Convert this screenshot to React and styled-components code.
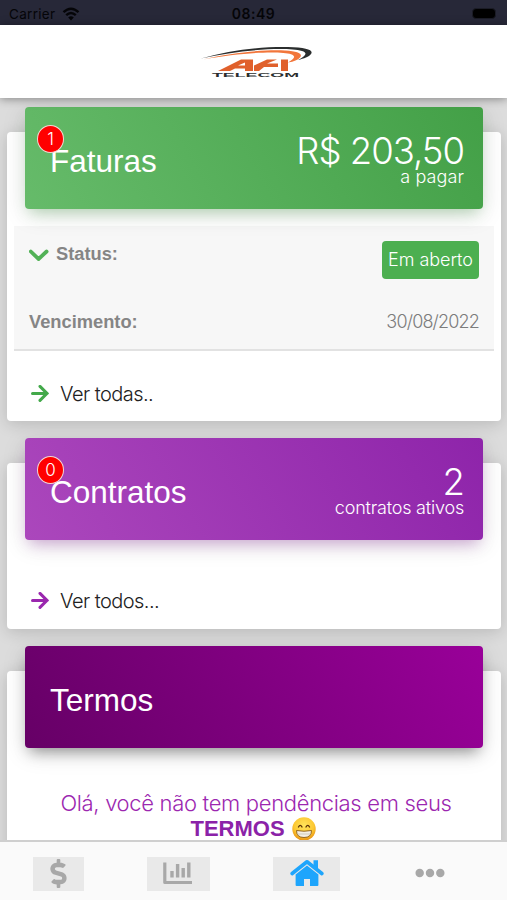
import React from 'react'
import styled, { createGlobalStyle } from 'styled-components'
import { FaDollarSign, FaEllipsisH } from 'react-icons/fa'

const App = () => {
  return (
    <React.Fragment>
      <GlobalStyle />
      <Wrap>
        <StatusBar>
          <Carrier>
            <span>Carrier</span>
            <Wifi />
          </Carrier>
          <Clock>08:49</Clock>
          <BatteryArea>
            <Battery />
          </BatteryArea>
        </StatusBar>
        <Header>
          <Logo />
        </Header>

        <Content>
          <Card height="289px">
            <CardHead bg="linear-gradient(60deg, #66bb6a, #43a047)" glow="rgba(76, 175, 80, 0.35)">
              <CardTitle>Faturas<Badge>1</Badge></CardTitle>
              <CardInfo>
                <Value>R$ 203,50</Value>
                <Label spacing="0.1px">a pagar</Label>
              </CardInfo>
            </CardHead>
            <Invoice>
              <InvoiceRow height="68px">
                <RowName>
                  <Chevron />
                  Status:
                </RowName>
                <StatusTag>Em aberto</StatusTag>
              </InvoiceRow>
              <InvoiceRow height="55px">
                <RowName low>Vencimento:</RowName>
                <DueDate>30/08/2022</DueDate>
              </InvoiceRow>
            </Invoice>
            <SeeAll height="85px">
              <Arrow color="#43a94a" />
              <SeeAllText>Ver todas..</SeeAllText>
            </SeeAll>
          </Card>

          <Card height="166px">
            <CardHead bg="linear-gradient(60deg, #ab47bc, #8e24aa)" glow="rgba(156, 39, 176, 0.35)">
              <CardTitle>Contratos<Badge>0</Badge></CardTitle>
              <CardInfo>
                <Value>2</Value>
                <Label spacing="-0.2px">contratos ativos</Label>
              </CardInfo>
            </CardHead>
            <SeeAll height="88px">
              <Arrow color="#9a27ae" />
              <SeeAllText>Ver todos...</SeeAllText>
            </SeeAll>
          </Card>

          <Card height="260px">
            <CardHead bg="linear-gradient(60deg, #660066, #990099)" glow="rgba(0, 0, 0, 0.4)">
              <CardTitle>Termos</CardTitle>
            </CardHead>
            <Message>
              <MessageText>Olá, você não tem pendências em seus</MessageText>
              <MessageStrong>
                TERMOS
                <Smile />
              </MessageStrong>
            </Message>
          </Card>
        </Content>

        <TabBar>
          <TabItem><TabBox width="51px"><FaDollarSign size={29} /></TabBox></TabItem>
          <TabItem><TabBox width="63px"><ChartIcon /></TabBox></TabItem>
          <TabItem><TabBox width="67px" active><HomeIcon /></TabBox></TabItem>
          <TabItem><TabBox width="60px" plain><FaEllipsisH size={30} /></TabBox></TabItem>
        </TabBar>
      </Wrap>
    </React.Fragment>
  )
}

const Wifi = () => (
  <svg width="18" height="14" viewBox="0 0 18 14">
    <path d="M1.5 5.2 Q9 -1.8 16.5 5.2 M4.2 8.2 Q9 3.8 13.8 8.2" fill="none" stroke="currentColor" strokeWidth="2.4" />
    <path d="M6.2 10.4 Q9 8 11.8 10.4 L9 13.4Z" fill="currentColor" />
  </svg>
)

const Logo = () => (
  <svg width="114" height="36" viewBox="0 0 114 36">
    <path d="M1 13.5 C30 5 62 1.5 88 2 C106 2.4 114 5 111 9 C109 12 104 13.5 98 15 C106 11 108 8 102 6 C85 1.5 39 5 1 13.5Z" fill="#2b2e2e" />
    <path d="M3 14.5 C34 7 66 4.5 85 5.5 C99 6.5 103 9 100 12.5 C98 15 94 16.5 88 17.5 C95 13.5 96 11 91 9.2 C81 6 42 7 3 14.5Z" fill="#f2763b" />
    <path d="M18 26 L41 14.5 H53 V26 H45 V23.5 H35 L30 26Z M38 20.5 H45 V17.5Z" fill="#e0602b" fillRule="evenodd" />
    <path d="M54 26 V20.5 L67 14.5 H77 L67 18.5 H78 V22 H64 L59 26Z" fill="#e0602b" />
    <path d="M81 14.5 H88 V26 H81Z" fill="#e0602b" />
    <LogoText x="12" y="32" textLength="87" lengthAdjust="spacingAndGlyphs">TELECOM</LogoText>
  </svg>
)

const Chevron = () => (
  <svg width="22" height="14" viewBox="0 0 22 14">
    <path d="M1.8 4.5 L9.6 12 L17.6 4.5" fill="none" stroke="#52b257" strokeWidth="3.8" strokeLinecap="round" />
  </svg>
)

const Arrow = ({ color }) => (
  <svg width="18" height="18" viewBox="0 0 18 18">
    <path d="M1.5 8.4 H16 M9 1.4 L16 8.4 L9 15.4" fill="none" stroke={color} strokeWidth="3" strokeLinecap="round" />
  </svg>
)

const ChartIcon = () => (
  <svg width="30" height="24" viewBox="0 0 30 24" fill="none" stroke="currentColor">
    <path d="M1.8 1.5 V21.5 H29" strokeWidth="3.2" strokeLinejoin="round" />
    <path d="M9 10 V16.5 M14.6 3 V16.5 M20.2 7 V16.5 M25.8 1.5 V16.5" strokeWidth="3.4" />
  </svg>
)

const HomeIcon = () => (
  <svg width="34" height="28" viewBox="0 0 34 28" fill="currentColor">
    <path d="M23.5 1.2 H28 V12 L23.5 8.5Z" />
    <path d="M2.2 14.5 L17 2.8 L31.8 14.5" fill="none" stroke="currentColor" strokeWidth="3.7" strokeLinecap="round" strokeLinejoin="round" />
    <path d="M5.6 15.6 L17 6.6 L28.4 15.6 V26 Q28.4 27 27.4 27 H20 V20 H14 V27 H6.6 Q5.6 27 5.6 26Z" />
  </svg>
)

const Smile = () => (
  <svg width="24" height="24" viewBox="0 0 24 24">
    <defs>
      <radialGradient id="face" cx="50%" cy="35%" r="65%">
        <stop offset="0" stopColor="#ffe45c" />
        <stop offset="0.65" stopColor="#fcc832" />
        <stop offset="1" stopColor="#e89012" />
      </radialGradient>
    </defs>
    <circle cx="12" cy="12" r="11.7" fill="url(#face)" />
    <path d="M6.5 10 Q8.2 6.8 10 10 M14 10 Q15.8 6.8 17.5 10" fill="none" stroke="#5c3408" strokeWidth="1.4" strokeLinecap="round" />
    <path d="M4.5 13.5 Q12 15 19.5 13.5 Q19.5 20.5 12 20.5 Q4.5 20.5 4.5 13.5Z" fill="#f4efe4" stroke="#8a5a18" strokeWidth="0.9" />
    <path d="M5 17 H19" stroke="#b9b1a4" strokeWidth="0.6" />
  </svg>
)

const GlobalStyle = createGlobalStyle`
  body {
    margin: 0;
    font-family: "Liberation Sans", Arial, sans-serif;
  }
  * {
    box-sizing: border-box;
  }
`

const Wrap = styled.div`
  width: 100%;
  height: 900px;
  display: flex;
  flex-direction: column;
  overflow: hidden;
  background-color: #dcdcdc;
`

const StatusBar = styled.div`
  height: 25px;
  flex-shrink: 0;
  display: grid;
  grid-template-columns: 1fr auto 1fr;
  align-items: center;
  padding: 2px 9px 0px 9px;
  background-color: #272838;
  color: #050508;
`

const Carrier = styled.div`
  display: flex;
  align-items: center;
  gap: 7px;
  font-family: Inter, sans-serif;
  font-size: 13.5px;
  letter-spacing: 0.3px;
`

const Clock = styled.div`
  font-family: Inter, sans-serif;
  font-size: 14px;
  font-weight: 600;
  letter-spacing: 0.5px;
`

const BatteryArea = styled.div`
  display: flex;
  justify-content: flex-end;
`

const Battery = styled.div`
  width: 24px;
  height: 11px;
  margin-right: 2px;
  border: 1px solid #1b1c26;
  border-radius: 4px;
  background-color: #000;
`

const Header = styled.div`
  height: 73px;
  flex-shrink: 0;
  display: flex;
  justify-content: center;
  padding: 20px 0px 0px 7px;
  background-color: #fff;
  box-shadow: 0px 1px 9px rgba(0, 0, 0, 0.4);
  z-index: 1;
`

const LogoText = styled.text`
  font-family: "Liberation Sans", Arial, sans-serif;
  font-size: 6px;
  font-weight: bold;
  fill: #2b2e2e;
`

const Content = styled.div`
  flex: 1;
  min-height: 0;
  overflow: hidden;
  padding: 34px 6px 0px 7px;
`

const Card = styled.div`
  height: ${(props) => props.height};
  margin-bottom: 42px;
  padding: 0px 7px;
  background-color: #fff;
  border-radius: 4px;
  box-shadow: 0px 3px 16px rgba(0, 0, 0, 0.16);
`

const CardHead = styled.div`
  height: 101.5px;
  position: relative;
  top: -25px;
  margin: 0px 11px -7.5px 11px;
  padding: 0px 19px 0px 25px;
  display: flex;
  justify-content: space-between;
  border-radius: 4px;
  background: ${(props) => props.bg};
  color: #fff;
  box-shadow: 0px 5px 24px rgba(0, 0, 0, 0.12), 0px 8px 14px -5px ${(props) => props.glow};
`

const CardTitle = styled.div`
  position: relative;
  margin-top: 36px;
  font-size: 31.5px;
  line-height: 36px;
`

const Badge = styled.div`
  position: absolute;
  top: -18px;
  left: -13px;
  width: 27px;
  height: 28px;
  border: 1.5px solid #f3d9d3;
  border-radius: 50%;
  background-color: #f00;
  font-family: Inter, sans-serif;
  font-weight: 300;
  font-size: 17px;
  line-height: 26px;
  text-align: center;
`

const CardInfo = styled.div`
  display: flex;
  flex-direction: column;
  align-items: flex-end;
  padding-top: 26px;
  font-family: Inter, sans-serif;
  font-weight: 300;
`

const Value = styled.div`
  font-size: 36.5px;
  line-height: 37px;
  letter-spacing: -1px;
`

const Label = styled.div`
  font-size: 18px;
  line-height: 14px;
  letter-spacing: ${(props) => props.spacing};
`

const Invoice = styled.div`
  height: 125px;
  background-color: #f7f7f7;
  border-bottom: 2px solid #e2e2e2;
`

const InvoiceRow = styled.div`
  height: ${(props) => props.height};
  display: flex;
  justify-content: space-between;
  align-items: center;
  padding: 0px 15px 0px 15px;
`

const RowName = styled.div`
  display: flex;
  align-items: center;
  gap: 5px;
  margin-top: ${(props) => (props.low ? '0px' : '-12px')};
  font-size: 18.3px;
  font-weight: bold;
  color: #858585;
`

const StatusTag = styled.div`
  width: 97px;
  height: 38px;
  border-radius: 4px;
  background-color: #4caf50;
  color: #fff;
  font-family: Inter, sans-serif;
  font-weight: 300;
  font-size: 18px;
  letter-spacing: -0.05px;
  line-height: 37px;
  text-align: center;
`

const DueDate = styled.div`
  font-family: Inter, sans-serif;
  font-weight: 300;
  font-size: 18px;
  letter-spacing: -0.83px;
  color: #7c7c7c;
`

const SeeAll = styled.div`
  height: ${(props) => props.height};
  display: flex;
  align-items: center;
  gap: 11px;
  padding: 0px 17px;
`

const SeeAllText = styled.div`
  font-family: Inter, sans-serif;
  font-weight: 300;
  font-size: 20px;
  letter-spacing: -0.55px;
  color: #222;
`

const Message = styled.div`
  margin-top: 25px;
  font-size: 22px;
  line-height: 26px;
  color: #9c27b0;
`

const MessageText = styled.div`
  font-family: Inter, sans-serif;
  font-weight: 300;
  text-align: center;
  white-space: nowrap;
  letter-spacing: -0.32px;
  transform: translateX(2px);
`

const MessageStrong = styled.div`
  display: flex;
  justify-content: center;
  align-items: center;
  gap: 7px;
  padding-right: 2px;
  font-weight: bold;
  color: #8b22a8;
`

const TabBar = styled.div`
  height: 60px;
  flex-shrink: 0;
  display: grid;
  grid-template-columns: 116px 124px 133px 113px;
  border-top: 2px solid #cfcfcf;
  background-color: #fafafa;
  z-index: 1;
`

const TabItem = styled.div`
  display: flex;
  justify-content: center;
  padding-top: 15px;
`

const TabBox = styled.div`
  width: ${(props) => props.width};
  height: 34px;
  display: flex;
  justify-content: center;
  align-items: center;
  padding-bottom: 2px;
  background-color: ${(props) => (props.plain ? 'transparent' : '#e9e9e9')};
  color: ${(props) => (props.active ? '#1ea5fc' : '#a8a8a8')};
`

export default App
